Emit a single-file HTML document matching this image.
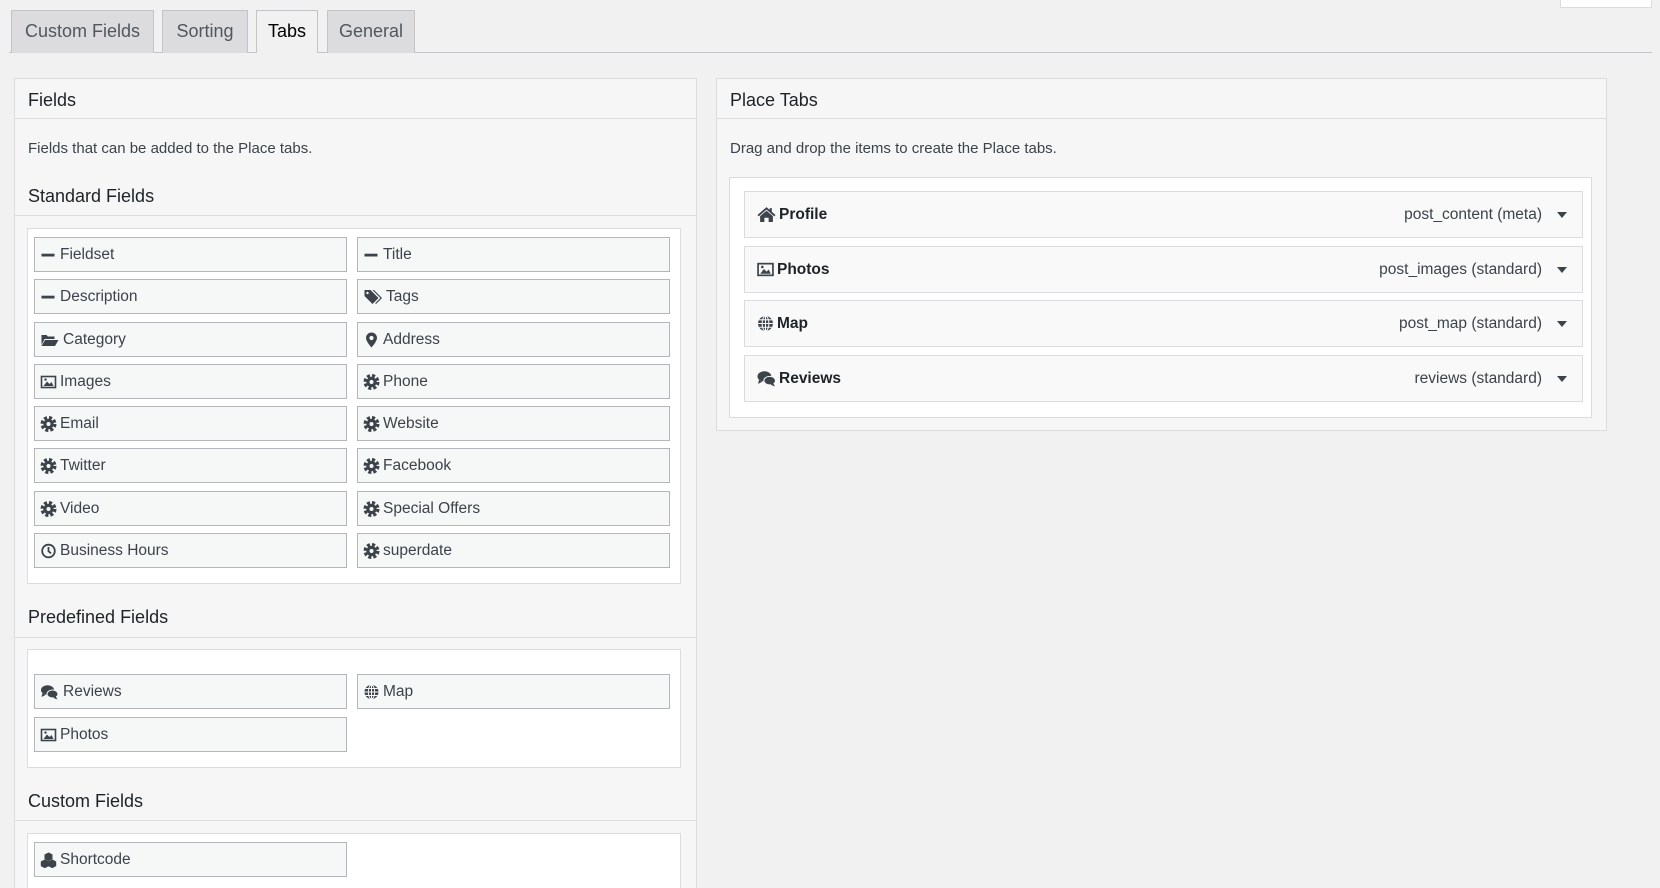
<!DOCTYPE html>
<html style="height:888px;overflow:hidden"><head><meta charset="utf-8">
<style>
*{box-sizing:border-box;margin:0;padding:0}
body{width:1660px;height:888px;overflow:hidden;background:#f1f1f1;font-family:"Liberation Sans",sans-serif;color:#3c434a;position:relative}
.a{position:absolute}
.tab{position:absolute;top:10px;height:43px;border:1px solid #c3c4c7;border-bottom:none;background:#dcdcde;font-size:18px;color:#50575e;text-align:center;line-height:41px}
.tab.on{background:#f1f1f1;color:#000;height:43px}
.panel{position:absolute;background:#f6f6f6;border:1px solid #dcdcde}
.h{position:absolute;font-size:18px;color:#1d2327}
.hr{position:absolute;left:0;right:0;height:1px;background:#dcdcde}
.box{position:absolute;background:#fff;border:1px solid #dcdcde}
.it{position:absolute;width:313px;height:35px;border:1px solid #b4b6b9;background:#f6f7f7;font-size:15.5px;line-height:33px;padding-left:25px;color:#3c434a}
.it svg{position:absolute;left:5px;top:9px;width:17px;height:16px}
.ri{position:absolute;left:744px;width:839px;height:47px;border:1px solid #dcdcde;background:#f9f9f9;font-size:15.5px;line-height:45px}
.ri b{position:absolute;left:34px;color:#1d2327}
.ri svg{position:absolute;left:11px;top:14px;width:19px;height:17px}
.ri span{position:absolute;right:40px;color:#3c434a}
.ri i{position:absolute;right:15px;top:20px;border-left:5px solid transparent;border-right:5px solid transparent;border-top:6px solid #3c434a}
</style></head><body>
<svg width="0" height="0" style="position:absolute">
<symbol id="minus" viewBox="0 0 16 16"><rect x="1" y="6.7" width="13" height="2.8" fill="#3c434a"/></symbol>
<symbol id="gear" viewBox="0 0 16 16"><circle cx="8" cy="8" r="5.8" fill="none" stroke="#3c434a" stroke-width="4.4" stroke-dasharray="2.8 1.8"/><circle cx="8" cy="8" r="5.2" fill="#3c434a"/><circle cx="8" cy="8" r="2" fill="#f6f7f7"/></symbol>
<symbol id="img" viewBox="0 0 16 16"><rect x="1" y="2.5" width="14" height="11" fill="none" stroke="#3c434a" stroke-width="1.6"/><path d="M3 12 L6.5 7.5 L9 10 L11 8 L13 12Z" fill="#3c434a"/><circle cx="5" cy="5.6" r="1.2" fill="#3c434a"/></symbol>
<symbol id="tags" viewBox="0 0 18 16"><path d="M1 1h6l8 8-6 6-8-8z" fill="#3c434a"/><circle cx="4" cy="4" r="1.2" fill="#f6f7f7"/><path d="M9 1h1.5l8 8-6 6-.8-.8 5.2-5.2z" fill="#3c434a"/></symbol>
<symbol id="folder" viewBox="0 0 18 16"><path d="M1 3h5l1.5 1.5H14V7H4L1 13z" fill="#3c434a"/><path d="M4.5 8H18l-3.5 6H1z" fill="#3c434a"/></symbol>
<symbol id="pin" viewBox="0 0 16 16"><path d="M8 0.5a5.5 5.5 0 0 1 5.5 5.5c0 3.5-5.5 9.5-5.5 9.5S2.5 9.5 2.5 6A5.5 5.5 0 0 1 8 0.5z" fill="#3c434a"/><circle cx="8" cy="6" r="2.1" fill="#f6f7f7"/></symbol>
<symbol id="clock" viewBox="0 0 16 16"><circle cx="8" cy="8" r="6.3" fill="none" stroke="#3c434a" stroke-width="1.8"/><path d="M8 4v4.3l2.6 2" fill="none" stroke="#3c434a" stroke-width="1.8"/></symbol>
<symbol id="comm" viewBox="0 0 18 16"><ellipse cx="7" cy="6" rx="6.5" ry="4.8" fill="#3c434a"/><path d="M2 9l-1 4 4-2z" fill="#3c434a"/><ellipse cx="12" cy="10" rx="5.5" ry="4" fill="#3c434a" stroke="#f6f7f7" stroke-width="1"/><path d="M15 12l2 3.5-4-1.5z" fill="#3c434a"/></symbol>
<symbol id="globe" viewBox="0 0 16 16"><circle cx="8" cy="8" r="7" fill="#3c434a"/><path d="M8 1v14M1 8h14M2 4.5h12M2 11.5h12" stroke="#f6f7f7" stroke-width="1"/><ellipse cx="8" cy="8" rx="3.2" ry="7" fill="none" stroke="#f6f7f7" stroke-width="1"/></symbol>
<symbol id="cubes" viewBox="0 0 16 16"><path d="M8 1l3.5 1.8v4L8 8.6 4.5 6.8v-4zM4.3 8l3.5 1.8v4L4.3 15.6.8 13.8v-4zM11.7 8l3.5 1.8v4l-3.5 1.8-3.5-1.8v-4z" fill="#3c434a" stroke="#3c434a" stroke-width="1"/></symbol>
<symbol id="home" viewBox="0 0 18 16"><path d="M9 1L0.5 8.5l1.2 1.3L9 3.4l7.3 6.4 1.2-1.3L14 5.4V2h-2v1.7z" fill="#3c434a"/><path d="M3 9.5L9 4.5l6 5V15h-4v-4H7v4H3z" fill="#3c434a"/></symbol>
</svg>

<div class="a" style="left:1560px;top:-2px;width:92px;height:10px;background:#fff;border:1px solid #dcdcde"></div>
<div class="a" style="left:9px;top:52px;width:1643px;height:1px;background:#c3c4c7"></div>
<div class="tab" style="left:11px;width:143px">Custom Fields</div>
<div class="tab" style="left:162px;width:86px">Sorting</div>
<div class="tab on" style="left:256px;width:62px">Tabs</div>
<div class="tab" style="left:327px;width:88px">General</div>

<div class="panel" style="left:14px;top:78px;width:683px;height:830px">
 <div class="h" style="left:13px;top:11px">Fields</div>
 <div class="hr" style="top:39px"></div>
 <div class="a" style="left:13px;top:61px;font-size:15px">Fields that can be added to the Place tabs.</div>
 <div class="h" style="left:13px;top:107px">Standard Fields</div>
 <div class="hr" style="top:136px"></div>
 <div class="h" style="left:13px;top:528px">Predefined Fields</div>
 <div class="hr" style="top:558px"></div>
 <div class="h" style="left:13px;top:712px">Custom Fields</div>
 <div class="hr" style="top:741px"></div>
</div>
<div class="box" style="left:27px;top:228px;width:654px;height:356px"></div>
<div class="box" style="left:27px;top:649px;width:654px;height:119px"></div>
<div class="box" style="left:27px;top:833px;width:654px;height:80px"></div>

<div class="it" style="left:34px;top:237px"><svg><use href="#minus"/></svg>Fieldset</div>
<div class="it" style="left:357px;top:237px"><svg><use href="#minus"/></svg>Title</div>
<div class="it" style="left:34px;top:279px"><svg><use href="#minus"/></svg>Description</div>
<div class="it" style="left:357px;top:279px;padding-left:28px"><svg style="width:19px"><use href="#tags"/></svg>Tags</div>
<div class="it" style="left:34px;top:322px;padding-left:28px"><svg style="width:19px"><use href="#folder"/></svg>Category</div>
<div class="it" style="left:357px;top:322px"><svg><use href="#pin"/></svg>Address</div>
<div class="it" style="left:34px;top:364px"><svg><use href="#img"/></svg>Images</div>
<div class="it" style="left:357px;top:364px"><svg><use href="#gear"/></svg>Phone</div>
<div class="it" style="left:34px;top:406px"><svg><use href="#gear"/></svg>Email</div>
<div class="it" style="left:357px;top:406px"><svg><use href="#gear"/></svg>Website</div>
<div class="it" style="left:34px;top:448px"><svg><use href="#gear"/></svg>Twitter</div>
<div class="it" style="left:357px;top:448px"><svg><use href="#gear"/></svg>Facebook</div>
<div class="it" style="left:34px;top:491px"><svg><use href="#gear"/></svg>Video</div>
<div class="it" style="left:357px;top:491px"><svg><use href="#gear"/></svg>Special Offers</div>
<div class="it" style="left:34px;top:533px"><svg><use href="#clock"/></svg>Business Hours</div>
<div class="it" style="left:357px;top:533px"><svg><use href="#gear"/></svg>superdate</div>

<div class="it" style="left:34px;top:674px;padding-left:28px"><svg style="width:19px"><use href="#comm"/></svg>Reviews</div>
<div class="it" style="left:357px;top:674px"><svg><use href="#globe"/></svg>Map</div>
<div class="it" style="left:34px;top:717px"><svg><use href="#img"/></svg>Photos</div>
<div class="it" style="left:34px;top:842px"><svg><use href="#cubes"/></svg>Shortcode</div>

<div class="panel" style="left:716px;top:78px;width:891px;height:353px">
 <div class="h" style="left:13px;top:11px">Place Tabs</div>
 <div class="hr" style="top:39px"></div>
 <div class="a" style="left:13px;top:61px;font-size:15px">Drag and drop the items to create the Place tabs.</div>
</div>
<div class="box" style="left:729px;top:177px;width:863px;height:241px"></div>
<div class="ri" style="top:191px"><svg style="width:21px"><use href="#home"/></svg><b>Profile</b><span>post_content (meta)</span><i></i></div>
<div class="ri" style="top:246px"><svg><use href="#img"/></svg><b style="left:32px">Photos</b><span>post_images (standard)</span><i></i></div>
<div class="ri" style="top:300px"><svg><use href="#globe"/></svg><b style="left:32px">Map</b><span>post_map (standard)</span><i></i></div>
<div class="ri" style="top:355px"><svg style="width:21px"><use href="#comm"/></svg><b>Reviews</b><span>reviews (standard)</span><i></i></div>
</body></html>
